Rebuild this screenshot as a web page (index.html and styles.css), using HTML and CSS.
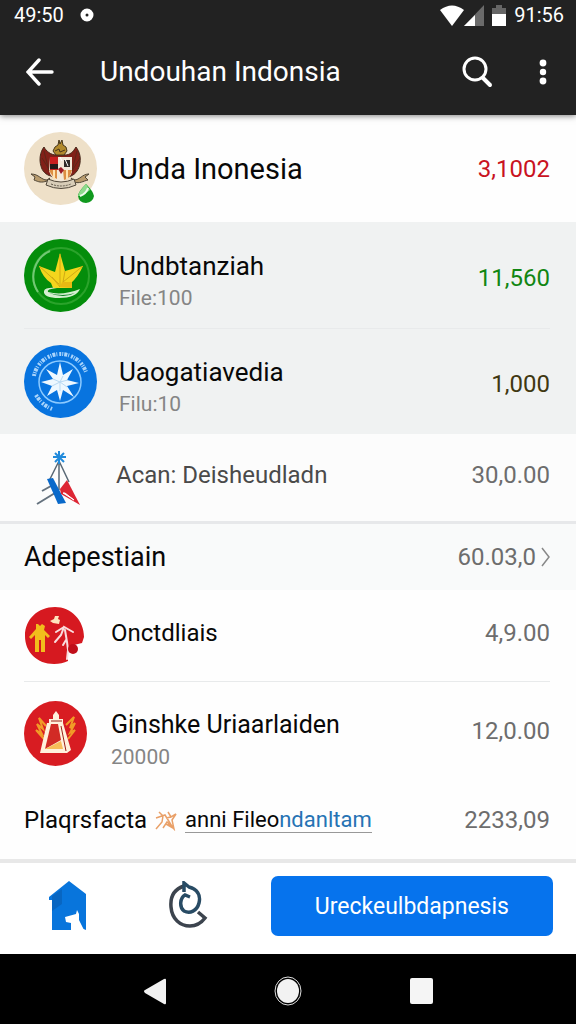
FILE: index.html
```html
<!DOCTYPE html>
<html lang="id">
<head>
  <meta charset="UTF-8">
  <meta name="viewport" content="width=device-width, initial-scale=1">
  <title>Undouhan Indonsia</title>
  <link rel="stylesheet" href="styles.css">
</head>
<body>

  <header class="header">
    <div class="status-bar">
      <span class="status-time">49:50</span>
      <svg width="14" height="14" viewBox="0 0 14 14"><circle cx="7" cy="7" r="4" fill="none" stroke="#fff" stroke-width="5"/></svg>
      <div class="status-icons">
        <svg width="24" height="21" viewBox="0 0 24 21"><path d="M0 5Q12-4 24 5L12 21Z" fill="#fff"/></svg>
        <svg width="20" height="21" viewBox="0 0 20 21"><path d="M20 0V21H0Z" fill="#6b6b6b"/><path d="M11 10V21H0Z" fill="#fff"/></svg>
        <svg class="battery" width="14" height="21" viewBox="0 0 14 21"><path d="M0 3H4V0H10V3H14V10H0Z" fill="#666"/><path d="M0 9H14V21H0Z" fill="#fff"/></svg>
      </div>
      <span class="status-time">91:56</span>
    </div>
    <div class="app-bar">
      <button class="icon-button" aria-label="Kembali">
        <svg width="28" height="28" viewBox="0 0 28 28" fill="none" stroke="#fff" stroke-width="3.4" stroke-linecap="round"><path d="M13 2L2 14L13 26M2 14H26"/></svg>
      </button>
      <h1 class="app-title">Undouhan Indonsia</h1>
      <button class="icon-button search" aria-label="Cari">
        <svg width="31" height="32" viewBox="0 0 31 32" fill="none" stroke="#fff" stroke-width="3" stroke-linecap="round"><circle cx="13" cy="13" r="11"/><path d="M21 22L28 29" stroke-width="4"/></svg>
      </button>
      <button class="icon-button" aria-label="Menu">
        <svg width="8" height="26" viewBox="0 0 8 26" fill="#fff"><circle cx="4" cy="4" r="3.4"/><circle cx="4" cy="13" r="3.2"/><circle cx="4" cy="22" r="3.4"/></svg>
      </button>
    </div>
  </header>

  <main class="list">
    <div class="row row-top">
      <svg class="row-icon" width="73" height="75" viewBox="0 0 73 75">
        <circle cx="36.5" cy="37.5" r="36.5" fill="#eee0c8"/>
        <path d="M32 24C27 24 22 20 20 16C16 21 15 29 17 35C18 40 22 44 27 45L36 49L47 45C52 43 55 38 56 32C57 25 55 20 52 16C49 21 46 24 41 24Z" fill="#812018" stroke="#45291b"/>
        <path d="M20 20L25 40M18 27L28 43M53 20L48 40M56 27L46 43" stroke="#5b2718"/>
        <path d="M35 9L36 13L38 9L39 14L42 16L43 20L40 24H32L29 20L31 16L34 14Z" fill="#b28a2d" stroke="#47371c"/>
        <path d="M31 20L35 18L36 21L41 19" fill="none" stroke="#49351a"/>
        <path d="M26 26H48V41Q46 48 37 51Q27 48 25 40Z" fill="#f3e8d8"/>
        <path d="M26 26H34V39H26Z" fill="#c91f20"/><path d="M26 33H34V38H26Z" fill="#251a1a"/>
        <path d="M40 29H46V36H40Z" fill="#302b28"/><path d="M41 28L44 35M36 26L38 30" stroke="#fff"/>
        <path d="M25 39H33V48Q28 46 25 39ZM39 39H48Q46 48 40 49Z" fill="#dc8e43"/>
        <path d="M30 39V48M43 39V48" stroke="#ffe3b0" stroke-width="2"/>
        <path d="M34 38L37 36L40 39L37 43Z" fill="#9b1b27"/>
        <path d="M23 49C17 49 15 43 7 43L11 46L10 49C15 51 17 52 23 50L26 47ZM50 49C56 49 58 43 65 43L61 46L64 49C59 50 56 53 50 51L47 47Z" fill="#b99c6e" stroke="#514737"/>
        <path d="M24 48Q37 54 50 48L52 54Q37 61 22 54Z" fill="#d8cdb8" stroke="#51483b"/>
        <path d="M27 53Q37 57 47 53" fill="none" stroke="#625a4c" stroke-dasharray="2 1"/>
        <path d="M62 53Q54 61 54 65Q55 72 62 72Q69 71 70 65Q69 60 62 53Z" fill="#10991e"/>
        <path d="M62 53Q55 60 54 65Q59 65 66 59Z" fill="#8edb8d"/><path d="M56 65Q62 63 64 57" fill="none" stroke="#effaec" stroke-width="2"/>
      </svg>
      <div class="row-text"><span class="row-title large">Unda Inonesia</span></div>
      <span class="amount red">3,1002</span>
    </div>

    <div class="group">
      <div class="row row-tall">
        <svg class="row-icon" width="73" height="73" viewBox="0 0 73 73">
          <circle cx="36.5" cy="36.5" r="36.5" fill="#048d0b"/>
          <circle cx="37" cy="37" r="28" fill="none" stroke="#2ba32b" stroke-width="2"/>
          <path d="M14 53A28 28 0 0 1 26 12" fill="none" stroke="#72c873" stroke-width="2"/>
          <path d="M36 14L41 32L59 27Q54 38 47 44L48 49H29L27 44Q19 39 15 27L31 33Z" fill="#f4d51d"/>
          <path d="M36 15V48L28 38M15 27L35 45M59 27L39 43L41 32" fill="none" stroke="#d1a914"/>
          <path d="M36 48L38 43H48V49Z" fill="#e9b913"/>
          <path d="M56 50Q52 59 35 59Q19 59 20 52Q21 48 33 49Q22 50 24 53Q38 57 56 50Z" fill="#d6efd1"/>
          <path d="M25 54Q39 58 51 54Q40 60 25 54Z" fill="#067b20"/>
        </svg>
        <div class="row-text">
          <span class="row-title">Undbtanziah</span>
          <span class="row-sub">File:100</span>
        </div>
        <span class="amount green">11,560</span>
      </div>
      <div class="row row-tall divided">
        <svg class="row-icon" width="73" height="73" viewBox="0 0 73 73">
          <circle cx="36.5" cy="36.5" r="36.5" fill="#0874df"/>
          <circle cx="36" cy="37" r="21" fill="none" stroke="#8ccaff" stroke-width="1.5"/>
          <path d="M10 31A27 27 0 0 1 62 27" fill="none" stroke="#a9d4fb" stroke-width="4" stroke-dasharray="2 1 1 1 3 1 1 2"/>
          <path d="M12 50Q18 60 28 64" fill="none" stroke="#a9d4fb" stroke-width="4" stroke-dasharray="2 1 3 1 1 2"/>
          <path d="M36 17L39 30L49 24L43 35L55 38L43 41L50 52L39 45L36 56L33 45L23 51L28 41L17 37L29 34L22 24L33 30Z" fill="#eef8ff"/>
          <path d="M36 37L39 31M36 37L44 35M36 37L43 42M36 37L36 46M36 37L28 41M36 37L29 34" stroke="#b9d9f2"/>
        </svg>
        <div class="row-text">
          <span class="row-title">Uaogatiavedia</span>
          <span class="row-sub">Filu:10</span>
        </div>
        <span class="amount olive">1,000</span>
      </div>
    </div>

    <div class="row row-plain">
      <svg class="row-icon" width="70" height="54" viewBox="0 0 70 54">
        <path d="M35 10L25 30M35 10V39M35 10L45 31" fill="none" stroke="#596875" stroke-width="1.5"/>
        <path d="M35 0V13M29 6H42M31 2L40 11M40 2L31 11" stroke="#218adb" stroke-width="2"/>
        <path d="M13 53L31 42M18 40L27 35" fill="none" stroke="#65727e" stroke-width="2"/>
        <path d="M23 28L29 27L42 52L34 53Z" fill="#0969ca"/>
        <path d="M36 38L43 29L56 54L37 43Z" fill="#dd2634"/><path d="M41 42L50 49L39 42Z" fill="#fff" stroke="#fff"/>
      </svg>
      <div class="row-text"><span class="row-title soft">Acan: Deisheudladn</span></div>
      <span class="amount">30,0.00</span>
    </div>

    <a class="row row-section" href="#">
      <h2 class="section-title">Adepestiain</h2>
      <span class="amount">60.03,0</span>
      <svg class="chevron" width="9" height="20" viewBox="0 0 9 20"><path d="M1 1L8 10L1 19" fill="none" stroke="#888" stroke-width="1.5"/></svg>
    </a>

    <div class="row row-person">
      <svg class="row-icon" width="63" height="60" viewBox="0 0 63 60">
        <path d="M31 1C47 1 60 14 60 31L58 37L50 39L44 44V55Q38 58 30 58C13 58 1 46 1 30C1 13 14 1 31 1Z" fill="#d61920"/>
        <path d="M14 18L16 20L18 18L21 20L20 24L26 30L24 32L21 29V46H17V34H15V46H11V29L7 33L5 31L12 23V18Z" fill="#f2bd1c"/>
        <path d="M26 15L30 13L31 10L35 10L34 13L36 14L35 18L29 17Z" fill="#ffe4bd"/>
        <path d="M31 36L37 29L40 21L49 26M40 21L32 26M41 24L43 36L44 44L43 53M39 39L42 34" fill="none" stroke="#f9dddd" stroke-width="2" stroke-linecap="round"/>
        <circle cx="49" cy="43" r="5" fill="#c00f1a"/>
      </svg>
      <div class="row-text"><span class="row-title">Onctdliais</span></div>
      <span class="amount">4,9.00</span>
    </div>

    <div class="row row-tall-small divided">
      <svg class="row-icon" width="63" height="65" viewBox="0 0 63 65">
        <ellipse cx="31.5" cy="32.5" rx="31.5" ry="32.5" fill="#d81c22"/>
        <path d="M22 25L15 17L19 28L13 23L18 33L12 29L20 38M42 24L50 16L46 27L51 22L46 32L51 29L44 38" fill="none" stroke="#f19b27" stroke-width="2"/>
        <path d="M29 14L32 10L35 14V18H39V22L47 49L43 52H16L23 22H25V18H29Z" fill="#fff1dc"/>
        <path d="M27 23L21 48L37 39L34 23Z" fill="#d22b25"/><path d="M21 48L37 40L39 48Z" fill="#f7bd59"/>
        <path d="M27 20H38M37 25L42 50" stroke="#9b2219" fill="none"/>
      </svg>
      <div class="row-text">
        <span class="row-title medium">Ginshke Uriaarlaiden</span>
        <span class="row-sub">20000</span>
      </div>
      <span class="amount">12,0.00</span>
    </div>

    <div class="row row-footer">
      <p class="footer-text">Plaqrsfacta
        <svg width="22" height="21" viewBox="0 0 22 21"><path d="M4 2L8 6L7 12L1 19M1 8L10 5L18 18L11 14M13 2L16 7L21 4L17 10L19 19L12 12L8 18M11 8L16 7" fill="none" stroke="#e9a068" stroke-width="1.5"/></svg>
        <a class="footer-link" href="#">anni Fileo<span class="blue">ndanltam</span></a>
      </p>
      <span class="amount">2233,09</span>
    </div>
  </main>

  <footer class="bottom-bar">
    <div class="tabs">
      <button class="icon-button" aria-label="Beranda">
        <svg width="38" height="50" viewBox="0 0 38 50"><path d="M20 0L37 13V49L32 47L29 40L27 44H22V49H3V19H0V16Z" fill="#0875dc"/><path d="M3 15L13 8V23L3 30Z" fill="#0866c2"/><path d="M16 36L27 33L28 29L30 33V39L35 49H22V42L17 41Z" fill="#fff"/></svg>
      </button>
      <button class="icon-button" aria-label="Aktivitas">
        <svg width="40" height="50" viewBox="0 0 40 50" fill="none" stroke-width="3.5"><path d="M16 5C7 8 2 15 3 26C4 38 12 45 22 45C29 45 34 41 37 37L30 31" stroke="#3c444e"/><path d="M16 11V2L21 6C29 8 33 14 31 22C29 30 22 33 16 30C11 26 12 17 17 14L22 16" stroke="#284b64"/></svg>
      </button>
    </div>
    <button class="primary-button">Ureckeulbdapnesis</button>
  </footer>

  <nav class="system-nav">
    <button class="icon-button" aria-label="Mundur"><svg width="22" height="27" viewBox="0 0 22 27"><path d="M20 1Q22 0 22 2V25Q22 27 20 26L1 15Q-1 13 1 12Z" fill="#f2f2f2"/></svg></button>
    <button class="icon-button" aria-label="Layar utama"><svg width="28" height="30" viewBox="0 0 28 30"><ellipse cx="14" cy="15" rx="13" ry="14" fill="none" stroke="#ddd"/><ellipse cx="14" cy="15" rx="11" ry="12" fill="#f2f2f2"/></svg></button>
    <button class="icon-button" aria-label="Terbaru"><svg width="23" height="26" viewBox="0 0 23 26"><rect width="23" height="26" rx="2" fill="#f5f5f5"/></svg></button>
  </nav>

</body>
</html>
```
FILE: styles.css
```css
* {
  box-sizing: border-box;
}

body {
  margin: 0;
  min-height: 100vh;
  display: flex;
  flex-direction: column;
  font-family: Roboto, Arial, sans-serif;
  background-color: #fefefe;
  color: #080808;
}

svg {
  display: block;
  flex-shrink: 0;
}

button {
  font-family: inherit;
  border: none;
  cursor: pointer;
}

.icon-button {
  padding: 0;
  background: none;
}

/* header */
.header {
  position: relative;
  background-color: #222;
  color: #fff;
  box-shadow: 0 1px 6px rgba(0, 0, 0, 0.5);
}

.status-bar {
  display: flex;
  align-items: center;
  height: 30px;
  padding: 0 12px 0 14px;
}

.status-bar > svg {
  margin-left: 16px;
}

.status-time {
  font-size: 20px;
  line-height: 30px;
}

.status-icons {
  display: flex;
  margin-left: auto;
  margin-right: 8px;
}

.battery {
  margin-left: 8px;
}

.app-bar {
  display: flex;
  align-items: center;
  height: 85px;
  padding: 0 29px 2px 26px;
}

.app-title {
  flex: 1;
  margin: 0 0 0 46px;
  font-size: 28px;
  font-weight: 400;
}

.search {
  margin-right: 46px;
}

/* list */
.list {
  flex: 1;
}

.row {
  display: flex;
  align-items: center;
  padding: 0 26px 0 24px;
}

.row-top {
  min-height: 107px;
}

.row-tall {
  min-height: 106px;
}

.group {
  background-color: #f0f2f2;
}

.divided {
  position: relative;
}

.divided::before {
  content: "";
  position: absolute;
  top: 0;
  left: 24px;
  right: 26px;
  height: 1px;
  background-color: #e8eaeb;
}

.row-plain {
  min-height: 87px;
  background-color: #fcfcfc;
}

.row-section {
  min-height: 69px;
  background-color: #f9fafa;
  border-top: 3px solid #e7e8ea;
  color: inherit;
  text-decoration: none;
}

.row-person {
  min-height: 91px;
}

.row-tall-small {
  min-height: 101px;
  padding-top: 4px;
}

.row-footer {
  min-height: 76px;
}

.row-text {
  display: flex;
  flex: 1;
  flex-direction: column;
  margin-left: 22px;
}

.row-person .row-text,
.row-tall-small .row-text {
  margin-left: 24px;
}

.row-tall .row-text,
.row-tall-small .row-text {
  padding-top: 14px;
}

.row-tall .amount {
  padding-top: 6px;
}

.row-plain .row-text,
.row-plain .amount,
.row-person .row-text,
.row-person .amount,
.row-tall-small .amount {
  padding-bottom: 6px;
}

.row-title {
  font-size: 26px;
  line-height: 32px;
}

.row-title.large {
  font-size: 29px;
}

.row-title.medium {
  font-size: 25px;
}

.row-title.soft,
.row-person .row-title {
  font-size: 24px;
}

.row-title.soft {
  color: #4a4a4a;
}

.row-sub {
  font-size: 21px;
  line-height: 32px;
  color: #858585;
}

.section-title {
  flex: 1;
  margin: 0;
  font-size: 27px;
  font-weight: 400;
}

.amount {
  font-size: 24px;
  color: #6d6d6d;
}

.red {
  color: #c9131f;
}

.green {
  color: #118613;
}

.olive {
  color: #403811;
}

.chevron {
  margin-left: 5px;
}

.footer-text {
  display: flex;
  flex: 1;
  align-items: center;
  gap: 8px;
  margin: 0;
  font-size: 24px;
}

.footer-link {
  border-bottom: 1px solid #999;
  color: inherit;
  font-size: 22px;
  text-decoration: none;
}

.blue {
  color: #2673b4;
}

/* bottom */
.bottom-bar {
  display: flex;
  align-items: center;
  padding: 13px 23px 18px 49px;
  border-top: 4px solid #e8e8e8;
  background-color: #fff;
}

.tabs {
  display: flex;
  flex: 1;
  gap: 81px;
}

.primary-button {
  width: 56%;
  height: 60px;
  border-radius: 7px;
  background-color: #0673ed;
  color: #fff;
  font-size: 23px;
}

.system-nav {
  display: flex;
  align-items: center;
  justify-content: center;
  gap: 108px;
  height: 70px;
  padding-top: 4px;
  background-color: #000;
}
```
